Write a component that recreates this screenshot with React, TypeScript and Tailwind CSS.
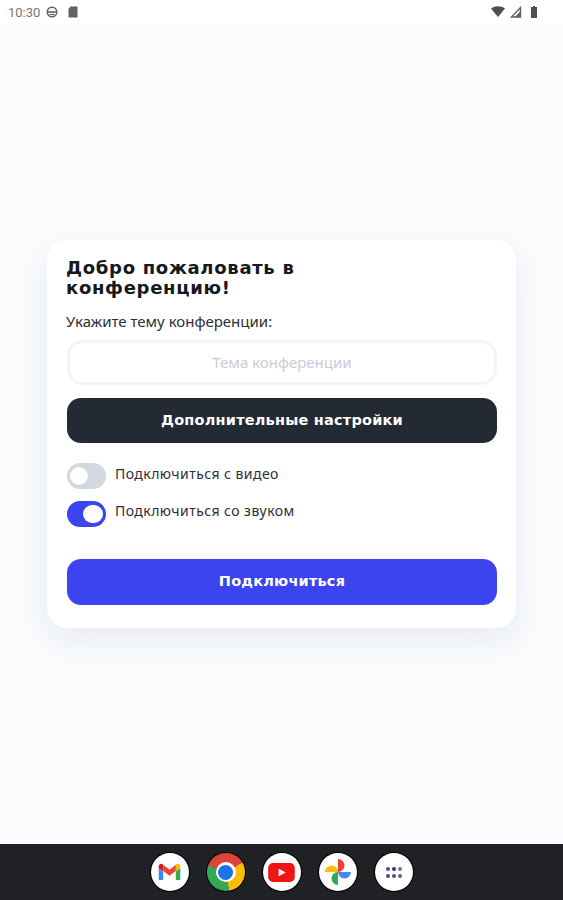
const heading = { fontFamily: '"DejaVu Sans", sans-serif' };

function StatusBar() {
  return (
    <div className="flex h-6 shrink-0 items-center justify-between bg-white pl-2 pr-[25px] text-[#74787c]">
      <div className="flex items-center">
        <span className="text-[13px] font-['Roboto',sans-serif] leading-none">10:30</span>
        <svg viewBox="0 0 12 12" className="ml-[6px] size-3" fill="none" stroke="#5f6368">
          <circle cx="6" cy="6" r="4.800" strokeWidth="1.400" />
          <path d="M1.500 6h9" strokeWidth="1.600" />
          <path d="M3.500 8.500h5" strokeWidth="1.200" />
        </svg>
        <svg viewBox="0 0 12 12" className="ml-[9px] size-3" fill="#5f6368">
          <path d="M3.500 0.500h7v11h-9V3z" />
        </svg>
      </div>
      <div className="flex items-center gap-[5px]">
        <svg viewBox="0 0 14 12" className="h-3 w-[14px]" fill="#4b4f53">
          <path d="M0 2.500C4 -0.500 10 -0.500 14 2.500L7 11z" />
        </svg>
        <svg viewBox="0 0 12 12" className="size-3" fill="none" stroke="#5f6368" strokeWidth="1.400">
          <path d="M1.500 11L10.500 1.500V11z" />
          <path d="M5 11L10.500 5V11z" fill="#5f6368" stroke="none" />
        </svg>
        <svg viewBox="0 0 8 12" className="ml-[3px] h-3 w-2" fill="#4b4f53">
          <path d="M3 0h2v1h2v11H1V1h2z" />
        </svg>
      </div>
    </div>
  );
}

function Toggle({ on }: { on: boolean }) {
  return (
    <div
      className={
        on
          ? "flex h-[26px] w-[39px] items-center justify-end rounded-full bg-[#3b44ef] pr-[3px]"
          : "flex h-[26px] w-[39px] items-center rounded-full bg-[#d2d7e0] pl-[3px]"
      }
    >
      <div className={on ? "h-[18px] w-[20px] rounded-full bg-white" : "h-[18px] w-[18px] rounded-full bg-white"} />
    </div>
  );
}

function DockIcon({ children }: { children: React.ReactNode }) {
  return (
    <div className="flex size-[38px] items-center justify-center rounded-full bg-white ring-1 ring-black">
      {children}
    </div>
  );
}

function Dock() {
  return (
    <div className="flex h-14 shrink-0 items-center justify-center gap-[18px] bg-[#202124]">
      <DockIcon>
        <svg viewBox="0 0 26 20" className="h-[18px] w-[25px]" fill="none">
          <path d="M1 6v12a1 1 0 0 0 1 1h4V9z" fill="#4285f4" />
          <path d="M25 6v12a1 1 0 0 1-1 1h-4V9z" fill="#34a853" />
          <path d="M1 3.500C1 1 3.800 0 5.500 1.400L6 2v7L1 6z" fill="#c5221f" />
          <path d="M6 2l7 5.500L20 2v7l-7 5.300L6 9z" fill="#ea4335" />
          <path d="M25 3.500C25 1 22.200 0 20.500 1.400L20 2v7l5-3z" fill="#fbbc04" />
        </svg>
      </DockIcon>
      <div className="relative size-[38px] rounded-full bg-[conic-gradient(from_60deg,#fbbc04_0deg_110deg,#34a853_110deg_230deg,#db4437_230deg_360deg)] ring-1 ring-black">
        <div className="absolute left-[9px] top-[9px] flex size-5 items-center justify-center rounded-full bg-white">
          <div className="size-[15px] rounded-full bg-[#1a73e8]" />
        </div>
      </div>
      <DockIcon>
        <svg viewBox="0 0 28 20" className="h-[19px] w-[27px]">
          <rect width="28" height="20" rx="5" fill="#f01414" />
          <path d="M11 6l7.500 4-7.500 4z" fill="#fff" />
        </svg>
      </DockIcon>
      <DockIcon>
        <svg viewBox="0 0 28 28" className="size-7">
          <path d="M14 14V1a6.500 6.500 0 0 1 0 13z" fill="#ea4335" />
          <path d="M14 14h13a6.500 6.500 0 0 1-13 0z" fill="#4285f4" />
          <path d="M14 14v13a6.500 6.500 0 0 1 0-13z" fill="#34a853" />
          <path d="M14 14H1a6.500 6.500 0 0 1 13 0z" fill="#fbbc04" />
        </svg>
      </DockIcon>
      <DockIcon>
        <svg viewBox="0 0 18 11" className="h-[11px] w-[18px]">
          <circle cx="3" cy="2" r="2" fill="#4a4f9c" />
          <circle cx="9" cy="2" r="2" fill="#2f3480" />
          <circle cx="15" cy="2" r="2" fill="#7b6f98" />
          <circle cx="3" cy="9" r="2" fill="#4a4f7c" />
          <circle cx="9" cy="9" r="2" fill="#4a4f7c" />
          <circle cx="15" cy="9" r="2" fill="#5f6080" />
        </svg>
      </DockIcon>
    </div>
  );
}

export default function App() {
  return (
    <div className="flex h-[900px] w-[563px] flex-col overflow-hidden bg-[#f9fbfd] font-['Noto_Sans',sans-serif]">
      <StatusBar />
      <main className="flex flex-1 items-center justify-center">
        <div className="w-[469px] rounded-[20px] bg-white pb-[23px] pl-5 pr-[19px] pt-[18px] shadow-[0_12px_32px_rgba(30,40,70,0.07)]">
          <h1 style={heading} className="-ml-[1px] w-[300px] text-[18px] font-bold leading-[20px] tracking-[0.7px] text-[#15181c]">
            Добро пожаловать в конференцию!
          </h1>
          <p className="-ml-[1px] mt-[13px] text-[15px] leading-[20px] text-[#2b2f33]">Укажите тему конференции:</p>
          <input
            readOnly
            placeholder="Тема конференции"
            className="mt-[9px] h-[45px] w-full rounded-[16px] border-[3px] border-[#f3f4f6] bg-white pb-[2px] text-center text-[15px] outline-none placeholder:text-[#c9ccd8]"
          />
          <button style={heading} className="mt-[13px] h-[45px] w-full rounded-[14px] bg-[#232a34] text-[14.500px] font-bold tracking-[0.2px] text-white">
            Дополнительные настройки
          </button>
          <div className="mt-5 flex items-start gap-[9px]">
            <Toggle on={false} />
            <span className="text-[14px] leading-[22px] tracking-[0.45px] text-[#2b2f33]">Подключиться с видео</span>
          </div>
          <div className="mt-3 flex items-start gap-[9px]">
            <Toggle on />
            <span className="text-[14px] leading-[20px] tracking-[0.45px] text-[#2b2f33]">Подключиться со звуком</span>
          </div>
          <button style={heading} className="mt-8 h-[46px] w-full rounded-[14px] bg-[#3b44ef] text-[14.500px] font-bold tracking-[0.2px] text-white">
            Подключиться
          </button>
        </div>
      </main>
      <Dock />
    </div>
  );
}
